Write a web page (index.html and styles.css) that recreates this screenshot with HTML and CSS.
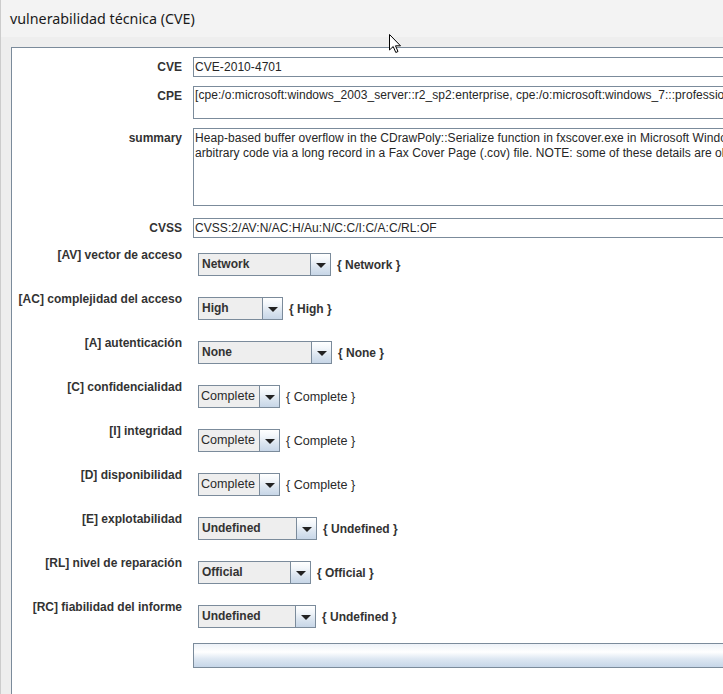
FILE: index.html
```html
<!DOCTYPE html>
<html>
<head>
<meta charset="utf-8">
<link rel="stylesheet" href="styles.css">
</head>
<body>
<div class="titlebar">vulnerabilidad técnica (CVE)</div>
<div class="main">
  <div class="panel">
    <div class="row r-cve">
      <div class="lbl">CVE</div>
      <div class="tf h20">CVE-2010-4701</div>
    </div>
    <div class="row r-cpe">
      <div class="lbl">CPE</div>
      <div class="tf h33">[cpe:/o:microsoft:windows_2003_server::r2_sp2:enterprise, cpe:/o:microsoft:windows_7:::professional, cpe:/o:microsoft:windows_xp::sp3]</div>
    </div>
    <div class="row r-sum">
      <div class="lbl">summary</div>
      <div class="tf h78">Heap-based buffer overflow in the CDrawPoly::Serialize function in fxscover.exe in Microsoft Windows Fax Services Cover Page Editor allows remote attackers to execute<br>arbitrary code via a long record in a Fax Cover Page (.cov) file. NOTE: some of these details are obtained from third party information.</div>
    </div>
    <div class="row r-cvss">
      <div class="lbl">CVSS</div>
      <div class="tf h20">CVSS:2/AV:N/AC:H/Au:N/C:C/I:C/A:C/RL:OF</div>
    </div>

    <div class="crow">
      <div class="lbl">[AV] vector de acceso</div>
      <div class="cwrap"><div class="combo w133"><span class="val">Network</span><span class="btn"><i></i></span></div><span class="cur">{ Network }</span></div>
    </div>
    <div class="crow">
      <div class="lbl">[AC] complejidad del acceso</div>
      <div class="cwrap"><div class="combo w85"><span class="val">High</span><span class="btn"><i></i></span></div><span class="cur">{ High }</span></div>
    </div>
    <div class="crow">
      <div class="lbl">[A] autenticación</div>
      <div class="cwrap"><div class="combo w134"><span class="val">None</span><span class="btn"><i></i></span></div><span class="cur">{ None }</span></div>
    </div>
    <div class="crow">
      <div class="lbl">[C] confidencialidad</div>
      <div class="cwrap"><div class="combo w82"><span class="val reg">Complete</span><span class="btn"><i></i></span></div><span class="cur reg">{ Complete }</span></div>
    </div>
    <div class="crow">
      <div class="lbl">[I] integridad</div>
      <div class="cwrap"><div class="combo w82"><span class="val reg">Complete</span><span class="btn"><i></i></span></div><span class="cur reg">{ Complete }</span></div>
    </div>
    <div class="crow">
      <div class="lbl">[D] disponibilidad</div>
      <div class="cwrap"><div class="combo w82"><span class="val reg">Complete</span><span class="btn"><i></i></span></div><span class="cur reg">{ Complete }</span></div>
    </div>
    <div class="crow">
      <div class="lbl">[E] explotabilidad</div>
      <div class="cwrap"><div class="combo w119"><span class="val">Undefined</span><span class="btn"><i></i></span></div><span class="cur">{ Undefined }</span></div>
    </div>
    <div class="crow">
      <div class="lbl">[RL] nivel de reparación</div>
      <div class="cwrap"><div class="combo w113"><span class="val">Official</span><span class="btn"><i></i></span></div><span class="cur">{ Official }</span></div>
    </div>
    <div class="crow">
      <div class="lbl">[RC] fiabilidad del informe</div>
      <div class="cwrap"><div class="combo w118"><span class="val">Undefined</span><span class="btn"><i></i></span></div><span class="cur">{ Undefined }</span></div>
    </div>
    <div class="bar"></div>
  </div>
</div>
<svg class="cursor" width="13" height="20" viewBox="0 0 13 20"><path d="M0.5 0.5 L0.5 16 L4.2 12.5 L6.8 18.5 L9 17.5 L6.5 11.8 L11.5 11.8 Z" fill="#fff" stroke="#000" stroke-width="1" stroke-linejoin="round"/></svg>
</body>
</html>
```

FILE: styles.css
```css
html, body {
  margin: 0;
  padding: 0;
}
body {
  width: 723px;
  height: 694px;
  overflow: hidden;
  background: #eeeeee;
  font-family: "Liberation Sans", Arial, sans-serif;
  position: relative;
  border-left: 1px solid #cccccc;
  box-sizing: border-box;
}
.titlebar {
  height: 37px;
  line-height: 37px;
  background: #f3f3f3;
  padding-left: 9px;
  font-family: "Noto Sans", "Open Sans", sans-serif;
  font-size: 14.3px;
  color: #1a1a1a;
}
.main {
  padding: 10px 0 0 10px;
}
.panel {
  width: 780px;
  height: 700px;
  background: #ffffff;
  border-top: 1px solid #7b8b9b;
  border-left: 1px solid #7b8b9b;
  padding-top: 9px;
  box-sizing: border-box;
}
.row {
  display: flex;
  align-items: flex-start;
}
.lbl {
  width: 170px;
  flex: none;
  text-align: right;
  font-weight: bold;
  font-size: 12px;
  line-height: 16px;
  color: #333333;
  white-space: nowrap;
}
.row .lbl {
  padding-top: 2px;
}
.tf {
  margin-left: 11px;
  flex: 1;
  box-sizing: border-box;
  border: 1px solid #7b8b9b;
  font-size: 12px;
  letter-spacing: 0.06px;
  color: #262626;
  padding: 0 1px;
  white-space: nowrap;
  overflow: hidden;
}
.h20 { height: 20px; line-height: 18px; }
.h33 { height: 33px; line-height: 15px; padding-top: 1px; }
.h78 { height: 78px; line-height: 15px; padding-top: 2px; }
.r-cve { margin-bottom: 9px; }
.r-cpe { margin-bottom: 9px; }
.r-sum { margin-bottom: 12px; }
.r-cvss { margin-bottom: 9px; }

.crow {
  display: flex;
  align-items: flex-start;
  height: 44px;
}
.cwrap {
  margin-left: 16px;
  margin-top: 6px;
  display: flex;
  align-items: center;
}
.combo {
  height: 23px;
  box-sizing: border-box;
  border: 1px solid #7b8b9b;
  background: #eeeeee;
  display: flex;
}
.w133 { width: 133px; }
.w85 { width: 85px; }
.w134 { width: 134px; }
.w82 { width: 82px; }
.w119 { width: 119px; }
.w113 { width: 113px; }
.w118 { width: 118px; }
.val {
  flex: 1;
  padding-left: 3px;
  font-size: 12px;
  font-weight: bold;
  line-height: 21px;
  color: #333333;
  white-space: nowrap;
}
.btn {
  width: 19px;
  flex: none;
  border-left: 1px solid #7b8b9b;
  background: linear-gradient(#ffffff 0%, #f2f6fa 30%, #dae4ef 65%, #c7d6e7 100%);
  display: flex;
  align-items: center;
  justify-content: center;
}
.btn i {
  display: block;
  width: 0;
  height: 0;
  border-left: 5px solid transparent;
  border-right: 5px solid transparent;
  border-top: 5px solid #222222;
  margin-top: 1px;
}
.cur {
  margin-left: 6px;
  font-size: 12px;
  font-weight: bold;
  color: #333333;
  white-space: nowrap;
}
.reg {
  font-weight: normal;
  font-size: 12.6px;
  color: #2a2a2a;
}
.val.reg {
  padding-left: 2px;
}
.bar {
  margin-left: 181px;
  height: 25px;
  box-sizing: border-box;
  border: 1px solid #7b8b9b;
  border-right: none;
  background: linear-gradient(#edf2f8 0%, #ffffff 35%, #dde7f2 65%, #c6d6e8 100%);
}
.cursor {
  position: absolute;
  left: 388px;
  top: 34px;
}
```
